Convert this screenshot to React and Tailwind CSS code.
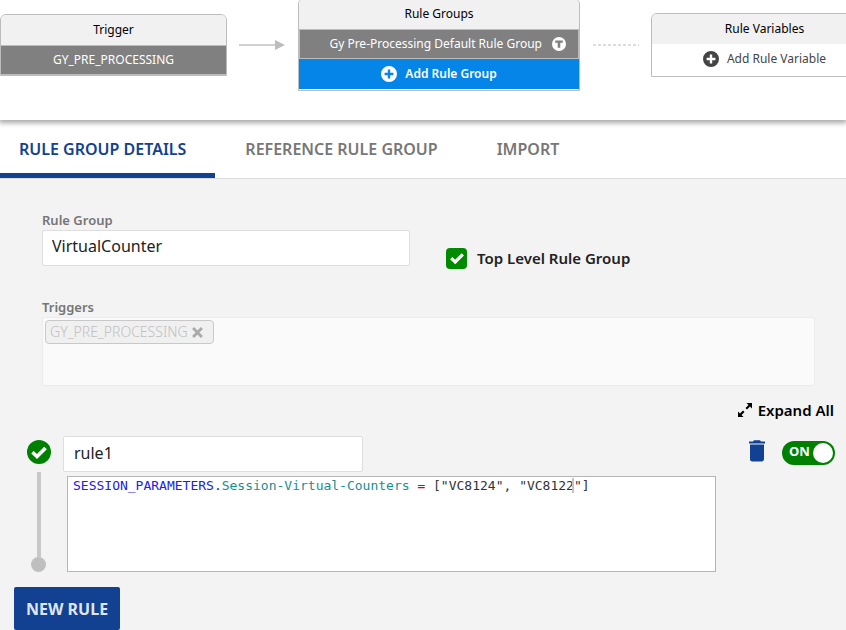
import { useState } from "react";

function PlusCircle({ className }) {
  return (
    <svg viewBox="0 0 16 16" className={className} aria-hidden="true">
      <path
        fillRule="evenodd"
        fill="currentColor"
        d="M8 0a8 8 0 1 0 0 16A8 8 0 0 0 8 0ZM6.8 3.6h2.4v3.2h3.2v2.4H9.2v3.2H6.8V9.2H3.6V6.8h3.2Z"
      />
    </svg>
  );
}

function TCircle() {
  return (
    <svg viewBox="0 0 14 14" className="size-3.5 shrink-0" aria-hidden="true">
      <circle cx="7" cy="7" r="7" fill="#fff" />
      <path d="M3.2 3.6h7.6v2.2H8.3v5H5.7v-5H3.2Z" fill="#808080" />
    </svg>
  );
}

function Card({ title, width, children }) {
  return (
    <section className={`${width} shrink-0 overflow-hidden rounded-t-md border border-[#bcbcbc] bg-white text-xs leading-5`}>
      <h2 className="bg-[#f1f1f1] py-[5px] text-center text-black">{title}</h2>
      {children}
    </section>
  );
}

function Flow() {
  return (
    <header className="relative z-10 overflow-hidden bg-white pb-[29px] shadow-[0_2px_5px_1px_rgba(0,0,0,0.35)]">
      <div className="-mt-0.5 flex items-center">
        <Card title="Trigger" width="w-[227px]">
          <button className="block w-full border-t border-b border-[#bcbcbc] bg-[#808080] py-1 text-center text-white">
            GY_PRE_PROCESSING
          </button>
        </Card>
        <svg viewBox="0 0 47 12" className="mx-3 h-3 w-[47px] shrink-0" aria-hidden="true">
          <path d="M0 6h37" stroke="#d0d0d0" strokeWidth="2" />
          <path d="M36 1v10l10-5Z" fill="#bdbdbd" />
        </svg>
        <Card title="Rule Groups" width="w-[282px]">
          <button className="flex w-full items-center justify-end gap-2.5 border border-b-0 border-[#bcbcbc] bg-[#808080] py-1 pr-3 text-white">
            Gy Pre-Processing Default Rule Group
            <TCircle />
          </button>
          <button className="mb-px flex w-full items-center justify-center gap-2 border-t border-[#bcbcbc] bg-[#0585e8] py-[5px] font-semibold text-white">
            <PlusCircle className="size-4" />
            Add Rule Group
          </button>
        </Card>
        <svg viewBox="0 0 47 2" className="mx-3 h-0.5 w-[47px] shrink-0" aria-hidden="true">
          <path d="M1 1h46" stroke="#bbb" strokeDasharray="3 2" />
        </svg>
        <Card title="Rule Variables" width="w-[227px]">
          <button className="flex w-full items-center justify-center gap-2 pt-[5px] pb-[7px] text-[#444]">
            <PlusCircle className="size-4" />
            Add Rule Variable
          </button>
        </Card>
      </div>
    </header>
  );
}

function Tabs() {
  return (
    <nav role="tablist" className="flex border-b border-[#dcdcdc] bg-white text-base leading-6 font-semibold text-[#777]">
      <button role="tab" aria-selected="true" className="border-b-[5px] border-[#124191] pt-[17px] pr-[29px] pb-3 pl-[19px] text-[#124191]">
        RULE GROUP DETAILS
      </button>
      <button role="tab" aria-selected="false" className="pt-[17px] pr-[29px] pb-[17px] pl-[30px]">REFERENCE RULE GROUP</button>
      <button role="tab" aria-selected="false" className="pt-[17px] pr-[29px] pb-[17px] pl-[30px]">IMPORT</button>
    </nav>
  );
}

function Check({ className }) {
  return (
    <svg viewBox="0 0 16 16" className={className} aria-hidden="true">
      <path d="M2.200 8.200 6.200 12 13.800 4.400" fill="none" stroke="#fff" strokeWidth="3.2" />
    </svg>
  );
}

function GroupForm() {
  return (
    <div className="px-[42px] pt-8">
      <div className="flex items-end gap-9">
        <div>
          <label htmlFor="group" className="block text-[13px] leading-[19px] font-semibold text-[#757575]">Rule Group</label>
          <input
            id="group"
            defaultValue="VirtualCounter"
            className="block h-9 w-[368px] rounded-xs border border-[#dedede] bg-white px-[9px] pb-1 text-base text-[#222]"
          />
        </div>
        <label className="-mb-1 flex items-center gap-2.5 text-[15px] leading-6 font-semibold text-[#222]">
          <span className="grid">
            <input type="checkbox" defaultChecked className="col-start-1 row-start-1 size-[21px] appearance-none rounded-sm bg-[#bbb] checked:bg-[#008a00]" />
            <Check className="pointer-events-none z-10 col-start-1 row-start-1 m-auto size-4" />
          </span>
          Top Level Rule Group
        </label>
      </div>
      <div className="-mr-[11px] pt-8">
        <h3 className="text-[13px] leading-[19px] font-semibold text-[#757575]">Triggers</h3>
        <div className="h-[69px] rounded-xs border border-[#ececec] bg-[#fafafa] p-0.5">
          <span className="flex h-6 w-fit items-center gap-1 rounded-sm border border-[#c8c8c8] bg-[#f0f0f0] pr-2.5 pl-1 text-sm font-light text-[#c0c0c0]">
            GY_PRE_PROCESSING
            <button aria-label="Remove trigger" disabled>
              <svg viewBox="0 0 10 10" className="size-[11px]" aria-hidden="true">
                <path d="m1 1 8 8m0-8-8 8" stroke="#aaa" strokeWidth="2.6" />
              </svg>
            </button>
          </span>
        </div>
      </div>
    </div>
  );
}

function CodeEditor() {
  return (
    <div className="relative mr-[130px] ml-[67px] h-24 border border-[#b5b5b5] bg-white font-['DejaVu_Sans_Mono',monospace] text-[13px] leading-[18px]">
      <pre aria-hidden="true" className="px-[5px] font-[inherit] text-[#333]">
        <span className="text-[#2020e8]">SESSION_PARAMETERS.</span>
        <span className="text-[#159090]">Session-Virtual-Counters</span>
        {" "}
        <span className="text-[#e00000]">=</span>
        {' ["VC8124", "VC8122'}
        <span className="shadow-[-2px_0_0_#c4c4c4]">"</span>
        {"]"}
      </pre>
      <textarea
        aria-label="Rule expression"
        spellCheck={false}
        readOnly
        defaultValue={'SESSION_PARAMETERS.Session-Virtual-Counters = ["VC8124", "VC8122"]'}
        className="absolute inset-0 resize-none px-[5px] text-transparent outline-none"
      />
    </div>
  );
}

function Rule() {
  const [on, setOn] = useState(true);
  return (
    <div className="pt-3.5">
      <div className="flex h-9 items-center pr-[11px] pl-[27px]">
        <span className="mb-1 grid size-6 place-items-center rounded-full bg-[#008000]">
          <Check className="size-[18px]" />
        </span>
        <input
          aria-label="Rule name"
          defaultValue="rule1"
          className="ml-3 h-9 w-[300px] rounded-xs border border-[#dedede] bg-white px-2.5 pb-0.5 text-base text-[#222]"
        />
        <button aria-label="Delete rule" className="mr-4 mb-1.5 ml-auto">
          <svg viewBox="0 0 18 22" className="h-[22px] w-[18px]" aria-hidden="true">
            <path d="M1 1.500h4L6 .3h6l1 1.200h4v2H1ZM2 4.500h14V19q0 2.500-2.500 2.500h-9Q2 21.500 2 19Z" fill="#124191" />
          </svg>
        </button>
        <label className="mb-0.5 flex h-6 w-[53px] items-center justify-between rounded-full bg-[#008000] pr-0.5 pl-[7px] text-[13px] leading-5 font-bold text-white">
          <input type="checkbox" checked={on} onChange={() => setOn(!on)} className="sr-only" />
          <span className="pb-1">{on ? "ON" : "OFF"}</span>
          <span className="size-5 rounded-full bg-white" />
        </label>
      </div>
      <div className="relative pt-1">
        <CodeEditor />
        <div className="absolute inset-y-0 left-[31px] flex w-[15px] flex-col items-center">
          <span className="w-1 grow bg-[#c8c8c8]" />
          <span className="size-[15px] rounded-full bg-[#bfbfbf]" />
        </div>
      </div>
    </div>
  );
}

export default function App() {
  return (
    <main className="min-h-screen overflow-hidden bg-[#f3f3f3] font-['Noto_Sans',sans-serif]">
      <Flow />
      <Tabs />
      <GroupForm />
      <div className="flex justify-end pt-3 pr-3">
        <button className="flex items-center gap-1.5 text-[15px] leading-6 font-semibold text-black">
          <svg viewBox="0 0 14 14" className="size-3.5" aria-hidden="true">
            <path d="M8.500 0H14v5.500l-2-2-3 3L7.500 5l3-3ZM5.500 14H0V8.500l2 2 3-3L6.500 9l-3 3Z" />
          </svg>
          Expand All
        </button>
      </div>
      <Rule />
      <button className="mt-[15px] ml-3.5 h-[43px] rounded-xs bg-[#124191] px-3 text-base font-bold text-[#dfe6f2]">
        NEW RULE
      </button>
    </main>
  );
}
